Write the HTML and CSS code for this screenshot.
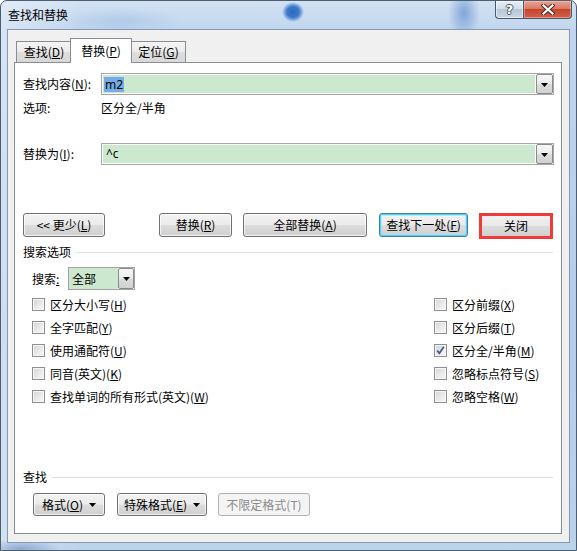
FILE: index.html
```html
<!DOCTYPE html>
<html lang="zh-CN">
<head>
<meta charset="utf-8">
<title>查找和替换</title>
<link rel="stylesheet" href="styles.css">
</head>
<body>
<div class="window">
  <div class="titlebar">
    <div class="title">查找和替换</div>
    <div class="caption">
      <div class="cap-btn help"><span>?</span></div>
      <div class="cap-btn close">
        <svg width="14" height="11" viewBox="0 0 14 11"><path d="M2.5 1.5 L11.5 9.5 M11.5 1.5 L2.5 9.5" stroke="#4a2a24" stroke-width="4.2" stroke-linecap="square"/><path d="M2.5 1.5 L11.5 9.5 M11.5 1.5 L2.5 9.5" stroke="#ffffff" stroke-width="2.2" stroke-linecap="square"/></svg>
      </div>
    </div>
  </div>
  <div class="client">
    <div class="tabs">
      <div class="tab tab-find">查找(<u>D</u>)</div>
      <div class="tab active">替换(<u>P</u>)</div>
      <div class="tab tab-goto">定位(<u>G</u>)</div>
    </div>
    <div class="panel">
      <div class="field-row row-find">
        <div class="lbl">查找内容(<u>N</u>):</div>
        <div class="combo">
          <div class="combo-text"><span class="sel">m2</span></div>
          <div class="dd"><svg width="7" height="4" viewBox="0 0 7 4"><path d="M0 0 H7 L3.5 4 Z" fill="#000"/></svg></div>
        </div>
      </div>
      <div class="opt-row"><div class="lbl">选项:</div><div>区分全/半角</div></div>
      <div class="field-row row-replace">
        <div class="lbl">替换为(<u>I</u>):</div>
        <div class="combo">
          <div class="combo-text"><span class="plain">^c</span></div>
          <div class="dd"><svg width="7" height="4" viewBox="0 0 7 4"><path d="M0 0 H7 L3.5 4 Z" fill="#000"/></svg></div>
        </div>
      </div>
      <div class="btn-row">
        <button class="btn w-less">&lt;&lt; 更少(<u>L</u>)</button>
        <div class="btn-group">
          <button class="btn w-rep">替换(<u>R</u>)</button>
          <button class="btn w-all">全部替换(<u>A</u>)</button>
          <button class="btn btn-default w-next">查找下一处(<u>F</u>)</button>
          <div class="mark"><button class="btn btn-close">关闭</button></div>
        </div>
      </div>
      <div class="sep sep-search"><span>搜索选项</span><i></i></div>
      <div class="search-row">
        <div class="slabel">搜索<u>:</u></div>
        <div class="select">
          <div class="select-val">全部</div>
          <div class="dd dd-small"><svg width="7" height="4" viewBox="0 0 7 4"><path d="M0 0 H7 L3.5 4 Z" fill="#000"/></svg></div>
        </div>
      </div>
      <div class="checks">
        <div class="chk"><span class="box"></span><span>区分大小写(<u>H</u>)</span></div>
        <div class="chk"><span class="box"></span><span>全字匹配(<u>Y</u>)</span></div>
        <div class="chk"><span class="box"></span><span>使用通配符(<u>U</u>)</span></div>
        <div class="chk"><span class="box"></span><span>同音(英文)(<u>K</u>)</span></div>
        <div class="chk"><span class="box"></span><span>查找单词的所有形式(英文)(<u>W</u>)</span></div>
        <div class="chk"><span class="box"></span><span>区分前缀(<u>X</u>)</span></div>
        <div class="chk"><span class="box"></span><span>区分后缀(<u>T</u>)</span></div>
        <div class="chk"><span class="box checked"><svg width="11" height="11" viewBox="0 0 11 11"><path d="M2.2 5.6 L4.4 8.3 L8.8 1.8" fill="none" stroke="#44598f" stroke-width="1.7"/></svg></span><span>区分全/半角(<u>M</u>)</span></div>
        <div class="chk"><span class="box"></span><span>忽略标点符号(<u>S</u>)</span></div>
        <div class="chk"><span class="box"></span><span>忽略空格(<u>W</u>)</span></div>
      </div>
      <div class="sep sep-find"><span>查找</span><i></i></div>
      <div class="bottom-row">
        <button class="btn w-fmt">格式(<u>O</u>)<svg class="arr" width="7" height="4" viewBox="0 0 7 4"><path d="M0 0 H7 L3.5 4 Z" fill="#000"/></svg></button>
        <button class="btn w-spec">特殊格式(<u>E</u>)<svg class="arr" width="7" height="4" viewBox="0 0 7 4"><path d="M0 0 H7 L3.5 4 Z" fill="#000"/></svg></button>
        <button class="btn btn-disabled w-nofmt">不限定格式(T)</button>
      </div>
    </div>
  </div>
</div>
</body>
</html>
```

FILE: styles.css
```css
* { box-sizing: border-box; }
html, body { margin: 0; padding: 0; }
body {
  width: 577px;
  height: 551px;
  overflow: hidden;
  background: #ffffff;
  font-family: "Noto Sans CJK SC", "Noto Sans", sans-serif;
  font-size: 12px;
  line-height: 16px;
  color: #000;
}
u { text-underline-offset: 1px; }

.window {
  width: 577px;
  height: 551px;
  border: 1px solid #4d5d72;
  border-radius: 7px 7px 0 0;
  display: flex;
  flex-direction: column;
  background:
    radial-gradient(ellipse 11px 10px at 292px 11px, #2d68bf 0%, #3c79c9 55%, rgba(90,140,205,0) 100%),
    radial-gradient(ellipse 16px 26px at 463px 12px, rgba(70,120,195,0.55), rgba(70,120,195,0)),
    radial-gradient(ellipse 60px 14px at 120px 20px, rgba(140,175,220,0.35), rgba(140,175,220,0)),
    radial-gradient(ellipse 40px 10px at 20px 548px, rgba(60,100,170,0.45), rgba(60,100,170,0)),
    linear-gradient(90deg, rgba(255,255,255,0.35) 0px, rgba(255,255,255,0) 80px),
    linear-gradient(180deg, #d2e2f3 0%, #c1d6ee 28px, #b4cce8 60%, #bcd3ec 100%);
}

.titlebar {
  height: 28px;
  flex: none;
  display: flex;
  justify-content: space-between;
  align-items: flex-start;
}
.title {
  margin-left: 7px;
  margin-top: 6px;
  color: #000;
}
.caption {
  display: flex;
  margin-right: 4px;
}
.cap-btn {
  height: 18px;
  display: flex;
  align-items: center;
  justify-content: center;
  border: 1px solid #4c5869;
  border-top: none;
}
.help {
  width: 28px;
  border-right: none;
  border-radius: 0 0 0 4px;
  background: linear-gradient(180deg, #e6edf5 0%, #d3dde9 45%, #b8c7d8 50%, #c9d6e4 100%);
  box-shadow: inset 0 0 0 1px rgba(255,255,255,0.55);
}
.help span {
  font-family: "DejaVu Sans", sans-serif;
  font-weight: bold;
  font-size: 13px;
  color: #fff;
  text-shadow: 1px 0 0 #4a5564, -1px 0 0 #4a5564, 0 1px 0 #4a5564, 0 -1px 0 #4a5564;
}
.close {
  width: 49px;
  border-radius: 0 0 4px 0;
  background: linear-gradient(180deg, #e8a493 0%, #d97a63 45%, #c4452e 50%, #d4624a 100%);
  box-shadow: inset 0 0 0 1px rgba(255,210,200,0.45);
}

.client {
  margin: 0 6px;
  height: 514px;
  flex: none;
  border: 1px solid #8598b0;
  background: #f0f0f0;
  padding: 8px 7px 0 6px;
}

.tabs {
  display: flex;
  height: 24px;
  padding-left: 2px;
  align-items: flex-start;
}
.tab {
  height: 21px;
  margin-top: 3px;
  border: 1px solid #898c95;
  border-bottom: none;
  background: linear-gradient(180deg, #f5f5f5 0%, #ebebeb 50%, #dedede 51%, #d8d8d8 100%);
  display: flex;
  align-items: center;
  justify-content: center;
}
.tab-find { width: 56px; }
.tab-goto { width: 55px; }
.tab.active {
  width: 62px;
  height: 25px;
  margin-top: 0;
  margin-left: -2px;
  margin-right: -1px;
  background: #fff;
  position: relative;
  z-index: 1;
  padding-bottom: 1px;
}

.panel {
  height: 472px;
  border: 1px solid #898c95;
  background: #fff;
  padding: 0 7px 0 8px;
}

.field-row {
  display: flex;
  align-items: center;
  height: 22px;
}
.row-find { margin-top: 10px; }
.row-replace { margin-top: 25px; }
.lbl { width: 78px; flex: none; }

.combo {
  flex: 1;
  height: 22px;
  border: 1px solid #a7a7a7;
  display: flex;
  background: #fff;
}
.combo-text {
  flex: 1;
  margin: 1px;
  background: #cce8cf;
  padding-left: 1px;
  display: flex;
  align-items: center;
}
.sel {
  background: #74ace6;
  color: #000;
  padding: 0 1px;
  line-height: 15px;
  font-family: "Noto Sans", sans-serif;
}
.plain {
  padding-left: 2px;
  font-family: "Noto Sans", sans-serif;
}
.dd {
  width: 17px;
  height: 20px;
  flex: none;
  border: 1px solid #8a8a8a;
  border-radius: 2px;
  background: linear-gradient(180deg, #f6f6f6 0%, #ebebeb 50%, #dcdcdc 51%, #d2d2d2 100%);
  display: flex;
  align-items: center;
  justify-content: center;
}
.dd svg { margin-top: 1px; }

.opt-row {
  margin-top: 3px;
  height: 20px;
  display: flex;
  align-items: center;
}

.btn {
  font: inherit;
  color: #000;
  height: 24px;
  padding: 0;
  border: 1px solid #707070;
  border-radius: 3px;
  background: linear-gradient(180deg, #f3f3f3 0%, #ebebeb 48%, #dddddd 52%, #cfcfcf 100%);
  box-shadow: inset 0 0 0 1px rgba(255,255,255,0.7);
  display: flex;
  align-items: center;
  justify-content: center;
  flex: none;
}
.btn-row {
  margin-top: 48px;
  height: 24px;
  display: flex;
  justify-content: space-between;
  align-items: flex-start;
}
.btn-group {
  display: flex;
  gap: 11px;
  margin-right: 1px;
}
.w-less { width: 82px; }
.w-rep { width: 73px; }
.w-all { width: 124px; }
.w-next { width: 89px; margin-left: 1px; }
.btn-default {
  border-color: #3c7fb1;
  box-shadow: inset 0 0 0 1px #4fd0f6, inset 0 0 0 2px rgba(160,225,250,0.6);
}
.mark {
  width: 74px;
  height: 26px;
  border: 3px solid #f03a3a;
  flex: none;
}
.btn-close {
  width: 68px;
  height: 20px;
  border: none;
  border-radius: 0;
  box-shadow: none;
  background: linear-gradient(180deg, #f1f1f1 0%, #e9e9e9 48%, #dbdbdb 52%, #d0d0d0 100%);
}

.sep {
  display: flex;
  align-items: center;
  height: 16px;
  margin-right: 1px;
}
.sep i {
  flex: 1;
  height: 1px;
  background: #d5dfe5;
}
.sep-search { margin-top: 7px; gap: 6px; }
.sep-find { margin-top: 61px; gap: 5px; }

.search-row {
  margin-top: 7px;
  height: 23px;
  display: flex;
  align-items: center;
  padding-left: 9px;
}
.slabel { width: 36px; flex: none; }
.select {
  width: 67px;
  height: 23px;
  border: 1px solid #a3a3a3;
  display: flex;
}
.select-val {
  flex: 1;
  background: #cce8cf;
  padding-left: 3px;
  display: flex;
  align-items: center;
}
.dd-small { width: 16px; height: 21px; }

.checks {
  margin-top: 3px;
  padding-left: 9px;
  display: grid;
  grid-template-columns: 402px auto;
  grid-template-rows: repeat(5, 23px);
  grid-auto-flow: column;
}
.chk {
  display: flex;
  align-items: center;
  gap: 5px;
}
.box {
  width: 13px;
  height: 13px;
  flex: none;
  border: 1px solid #8f8f8f;
  background: linear-gradient(135deg, #d4d4d4 0%, #ececec 60%, #f8f8f8 100%);
  box-shadow: inset 0 0 0 1px #f6f6f6;
  display: flex;
  align-items: center;
  justify-content: center;
}

.bottom-row {
  margin-top: 8px;
  height: 23px;
  display: flex;
  padding-left: 10px;
  gap: 12px;
}
.bottom-row .btn { height: 23px; }
.w-fmt { width: 72px; }
.w-spec { width: 90px; }
.w-nofmt { width: 92px; margin-left: -1px; }
.arr { margin-left: 6px; }
.btn-disabled {
  border-color: #adb2b5;
  background: #f4f4f4;
  box-shadow: none;
  color: #8b8b8b;
}
```
